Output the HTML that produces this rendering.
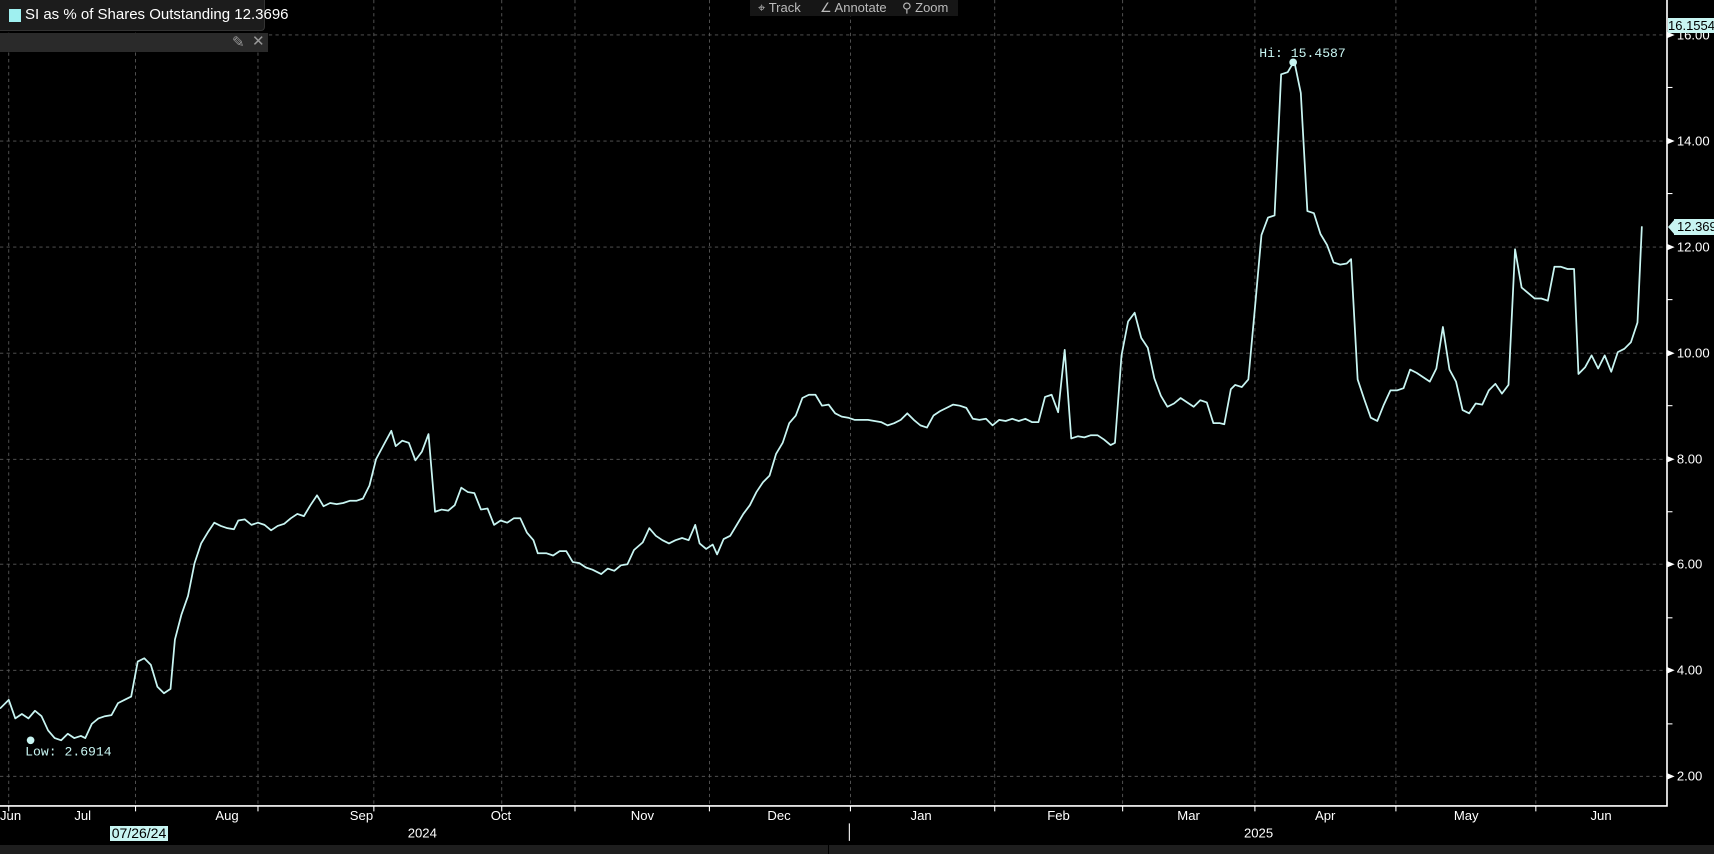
<!DOCTYPE html>
<html><head><meta charset="utf-8"><style>
html,body{margin:0;padding:0;background:#000;width:1714px;height:854px;overflow:hidden;font-family:"Liberation Sans","DejaVu Sans",sans-serif}
.abs{position:absolute}
</style></head><body>
<svg class="abs" style="left:0;top:0" width="1714" height="854" viewBox="0 0 1568 781" preserveAspectRatio="none">
<g stroke="#5a5a5a" stroke-width="0.8" stroke-dasharray="3,3">
<line x1="0" y1="32" x2="1525" y2="32"/><line x1="0" y1="129" x2="1525" y2="129"/><line x1="0" y1="226" x2="1525" y2="226"/><line x1="0" y1="323" x2="1525" y2="323"/><line x1="0" y1="420" x2="1525" y2="420"/><line x1="0" y1="516" x2="1525" y2="516"/><line x1="0" y1="613" x2="1525" y2="613"/><line x1="0" y1="710" x2="1525" y2="710"/>
<line x1="8" y1="0" x2="8" y2="737"/><line x1="124" y1="0" x2="124" y2="737"/><line x1="236" y1="0" x2="236" y2="737"/><line x1="342" y1="0" x2="342" y2="737"/><line x1="459" y1="0" x2="459" y2="737"/><line x1="526" y1="0" x2="526" y2="737"/><line x1="649" y1="0" x2="649" y2="737"/><line x1="778" y1="0" x2="778" y2="737"/><line x1="910" y1="0" x2="910" y2="737"/><line x1="1027" y1="0" x2="1027" y2="737"/><line x1="1148" y1="0" x2="1148" y2="737"/><line x1="1277" y1="0" x2="1277" y2="737"/><line x1="1405" y1="0" x2="1405" y2="737"/>
</g>
<g stroke="#fff" stroke-width="1.5" fill="none">
<polyline points="0,737 1525,737 1525,0"/>
</g>
<g stroke="#fff" stroke-width="1">
<line x1="8" y1="737" x2="8" y2="742"/><line x1="124" y1="737" x2="124" y2="742"/><line x1="236" y1="737" x2="236" y2="742"/><line x1="342" y1="737" x2="342" y2="742"/><line x1="459" y1="737" x2="459" y2="742"/><line x1="526" y1="737" x2="526" y2="742"/><line x1="649" y1="737" x2="649" y2="742"/><line x1="778" y1="737" x2="778" y2="742"/><line x1="910" y1="737" x2="910" y2="742"/><line x1="1027" y1="737" x2="1027" y2="742"/><line x1="1148" y1="737" x2="1148" y2="742"/><line x1="1277" y1="737" x2="1277" y2="742"/><line x1="1405" y1="737" x2="1405" y2="742"/>
<line x1="1525" y1="80" x2="1530" y2="80"/><line x1="1525" y1="177" x2="1530" y2="177"/><line x1="1525" y1="274" x2="1530" y2="274"/><line x1="1525" y1="371" x2="1530" y2="371"/><line x1="1525" y1="468" x2="1530" y2="468"/><line x1="1525" y1="565" x2="1530" y2="565"/><line x1="1525" y1="662" x2="1530" y2="662"/>
<line x1="777" y1="753" x2="777" y2="769"/>
</g>
<g fill="#fff"><path d="M1525,29 l7,3 -7,3z"/><path d="M1525,126 l7,3 -7,3z"/><path d="M1525,223 l7,3 -7,3z"/><path d="M1525,320 l7,3 -7,3z"/><path d="M1525,417 l7,3 -7,3z"/><path d="M1525,513 l7,3 -7,3z"/><path d="M1525,610 l7,3 -7,3z"/><path d="M1525,707 l7,3 -7,3z"/></g>
<g fill="#fff" font-size="12" font-family="Liberation Sans, sans-serif">
<text x="1534" y="36">16.00</text><text x="1534" y="133">14.00</text><text x="1534" y="230">12.00</text><text x="1534" y="327">10.00</text><text x="1534" y="424">8.00</text><text x="1534" y="520">6.00</text><text x="1534" y="617">4.00</text><text x="1534" y="714">2.00</text>
<text x="0" y="750">Jun</text><text x="68" y="750">Jul</text><text x="197" y="750">Aug</text><text x="320" y="750">Sep</text><text x="449" y="750">Oct</text><text x="577" y="750">Nov</text><text x="702" y="750">Dec</text><text x="833" y="750">Jan</text><text x="958" y="750">Feb</text><text x="1077" y="750">Mar</text><text x="1203" y="750">Apr</text><text x="1330" y="750">May</text><text x="1455" y="750">Jun</text>
<text x="373" y="766">2024</text><text x="1138" y="766">2025</text>
</g>
<polyline fill="none" stroke="#c8f5f2" stroke-width="1.6" stroke-linejoin="round" points="0,648 8,640 14,657 20,653 26,657 32,650 38,655 44,668 50,675 56,677 62,671 68,675 74,673 78,675 84,662 90,657 96,655 102,654 108,643 114,640 120,637 126,605 132,602 138,608 144,628 150,634 156,630 160,585 166,562 172,545 178,515 184,497 190,487 196,478 202,481 208,483 214,484 218,476 224,475 230,480 236,478 242,480 248,485 254,481 260,479 266,474 272,470 278,472 284,462 290,453 296,463 302,460 308,461 314,460 320,458 326,458 332,456 338,444 344,420 352,405 358,394 362,408 368,403 374,405 380,421 386,413 392,397 398,468 404,466 410,467 416,462 422,446 428,450 434,451 440,466 446,465 452,480 458,476 464,478 470,474 476,474 482,487 488,494 492,506 500,506 506,508 512,504 518,504 524,514 530,515 536,519 542,521 550,525 556,520 562,522 568,517 574,516 580,503 588,496 594,483 600,490 606,494 612,497 618,494 624,492 630,494 636,480 640,497 646,502 652,498 656,507 662,493 668,490 674,480 680,470 686,462 692,450 698,441 704,435 710,415 716,405 722,387 728,380 734,364 740,361 746,361 752,371 758,370 764,378 770,381 776,382 782,384 788,384 794,384 800,385 806,386 812,389 818,387 824,384 830,378 836,384 842,389 848,391 854,380 860,376 866,373 872,370 878,371 884,373 890,383 896,384 902,383 908,389 914,384 920,385 926,383 932,385 938,383 944,386 950,386 956,363 962,361 968,377 974,320 980,401 986,399 992,400 998,398 1004,398 1010,402 1016,407 1020,405 1026,325 1032,294 1038,286 1044,309 1050,318 1056,346 1062,362 1068,372 1074,369 1080,364 1086,368 1092,372 1098,366 1104,368 1110,387 1116,387 1120,388 1126,356 1130,352 1136,354 1142,347 1148,282 1154,215 1160,199 1166,197 1172,68 1178,66 1184,56 1190,85 1196,193 1202,195 1208,214 1214,224 1220,240 1226,242 1232,241 1236,237 1242,347 1248,365 1254,382 1260,385 1266,370 1272,357 1278,357 1284,355 1290,338 1296,341 1302,345 1308,349 1314,337 1320,299 1326,338 1332,349 1338,375 1344,378 1350,369 1356,370 1362,357 1368,351 1374,360 1380,352 1386,228 1392,263 1398,268 1404,273 1410,273 1416,275 1422,244 1428,244 1434,246 1440,246 1444,342 1450,336 1456,325 1462,337 1468,325 1474,340 1480,322 1486,319 1492,313 1498,295 1502,207"/>
<circle cx="1183" cy="57" r="3.5" fill="#c8f5f2"/><circle cx="28" cy="677" r="3.5" fill="#c8f5f2"/>
<g fill="#c8f5f2" font-size="12" font-family="Liberation Mono, monospace">
<text x="1152" y="52">Hi: 15.4587</text><text x="23" y="691">Low: 2.6914</text>
</g>
</svg>
<div class="abs" style="left:0;top:0;width:264px;height:30px;background:#1c1c1c;border:1px solid #333;border-left:none;border-top:none;border-radius:0 0 4px 0"></div>
<div class="abs" style="left:9px;top:9px;width:12px;height:13px;background:#9ff0f0"></div>
<div class="abs" style="left:25px;top:6px;color:#fff;font-size:15px;white-space:nowrap">SI as % of Shares Outstanding 12.3696</div>
<div class="abs" style="left:0;top:33px;width:268px;height:19px;background:#2a2a2a;color:#999;font-size:15px"><span class="abs" style="left:232px;top:0">✎</span><span class="abs" style="left:252px;top:-1px">✕</span></div>
<div class="abs" style="left:750px;top:0;width:208px;height:16px;background:#161616;color:#bbb;font-size:13px;white-space:nowrap"><span class="abs" style="left:8px;top:0">⌖ Track</span><span class="abs" style="left:70px;top:0">∠ Annotate</span><span class="abs" style="left:152px;top:0">⚲ Zoom</span></div>
<div class="abs" style="left:1668px;top:18px;width:46px;height:15px;background:#c8f5f2;color:#000;font-size:13px;line-height:15px;overflow:hidden">16.1554</div>
<div class="abs" style="left:1674px;top:219px;width:40px;height:16px;background:#c8f5f2;color:#000;font-size:13px;line-height:16px;overflow:hidden;padding-left:3px">12.369</div>
<div class="abs" style="left:1668px;top:219px;width:0;height:0;border-top:8px solid transparent;border-bottom:8px solid transparent;border-right:7px solid #c8f5f2"></div>
<div class="abs" style="left:110px;top:826px;width:58px;height:15px;background:#c8f5f2;color:#000;font-size:14px;line-height:15px;text-align:center">07/26/24</div>
<div class="abs" style="left:0;top:845px;width:828px;height:9px;background:#1e1e1e"></div>
<div class="abs" style="left:829px;top:845px;width:885px;height:9px;background:#1e1e1e"></div>
</body></html>
